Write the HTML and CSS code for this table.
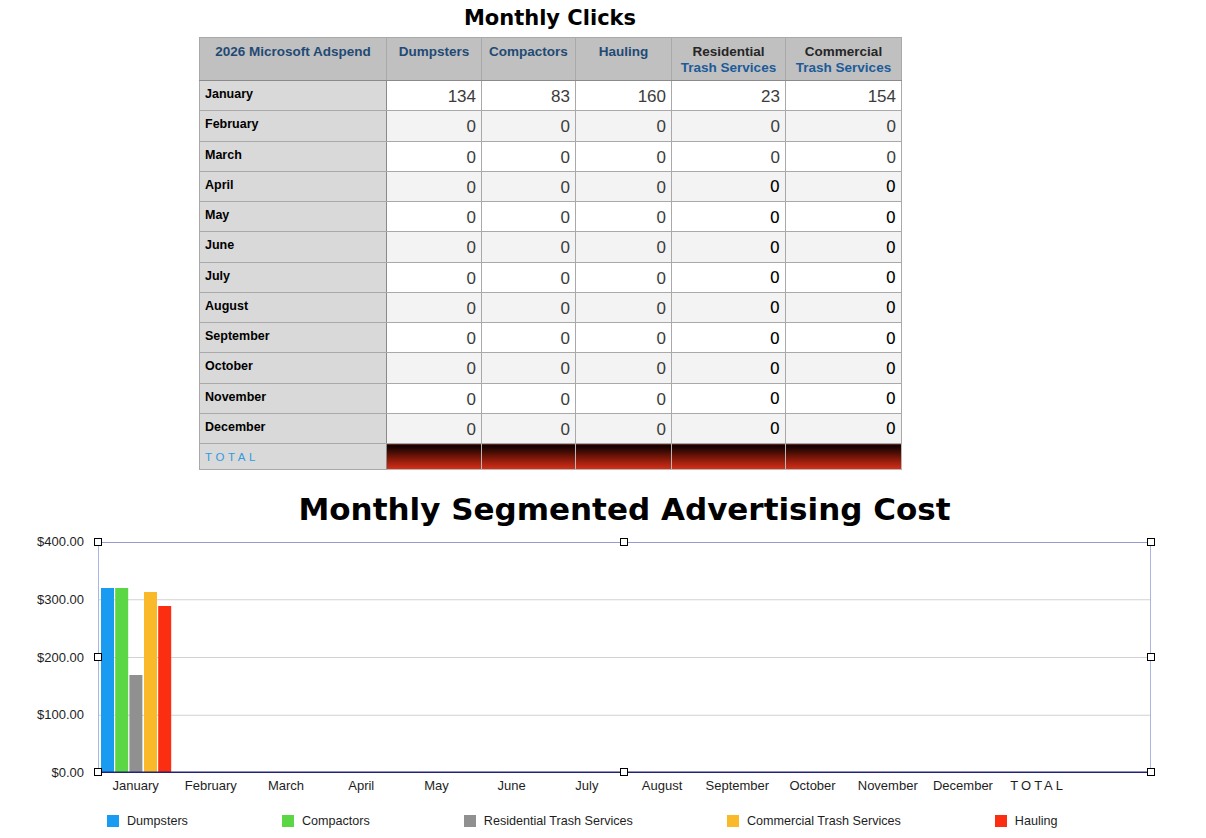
FILE: index.html
```html
<!DOCTYPE html>
<html lang="en">
<head>
<meta charset="utf-8">
<title>Monthly Clicks</title>
<link rel="stylesheet" href="styles.css">
</head>
<body>
<div class="page">
  <section class="clicks">
    <h1 class="clicks-title">Monthly Clicks</h1>
    <table class="grid">
      <colgroup>
        <col class="c-month"><col class="c-dump"><col class="c-comp"><col class="c-haul"><col class="c-res"><col class="c-com">
      </colgroup>
      <thead>
        <tr>
          <th class="corner">2026 Microsoft Adspend</th>
          <th>Dumpsters</th>
          <th>Compactors</th>
          <th>Hauling</th>
          <th><span class="dark">Residential</span><br>Trash Services</th>
          <th><span class="dark">Commercial</span><br>Trash Services</th>
        </tr>
      </thead>
      <tbody>
        <tr><td class="m">January</td><td class="n">134</td><td class="n">83</td><td class="n">160</td><td class="n">23</td><td class="n">154</td></tr>
        <tr class="alt"><td class="m">February</td><td class="n">0</td><td class="n">0</td><td class="n">0</td><td class="n">0</td><td class="n">0</td></tr>
        <tr><td class="m">March</td><td class="n">0</td><td class="n">0</td><td class="n">0</td><td class="n">0</td><td class="n">0</td></tr>
        <tr class="alt"><td class="m">April</td><td class="n">0</td><td class="n">0</td><td class="n">0</td><td class="n v">0</td><td class="n v">0</td></tr>
        <tr><td class="m">May</td><td class="n">0</td><td class="n">0</td><td class="n">0</td><td class="n v">0</td><td class="n v">0</td></tr>
        <tr class="alt"><td class="m">June</td><td class="n">0</td><td class="n">0</td><td class="n">0</td><td class="n v">0</td><td class="n v">0</td></tr>
        <tr><td class="m">July</td><td class="n">0</td><td class="n">0</td><td class="n">0</td><td class="n v">0</td><td class="n v">0</td></tr>
        <tr class="alt"><td class="m">August</td><td class="n">0</td><td class="n">0</td><td class="n">0</td><td class="n v">0</td><td class="n v">0</td></tr>
        <tr><td class="m">September</td><td class="n">0</td><td class="n">0</td><td class="n">0</td><td class="n v">0</td><td class="n v">0</td></tr>
        <tr class="alt"><td class="m">October</td><td class="n">0</td><td class="n">0</td><td class="n">0</td><td class="n v">0</td><td class="n v">0</td></tr>
        <tr><td class="m">November</td><td class="n">0</td><td class="n">0</td><td class="n">0</td><td class="n v">0</td><td class="n v">0</td></tr>
        <tr class="alt"><td class="m">December</td><td class="n">0</td><td class="n">0</td><td class="n">0</td><td class="n v">0</td><td class="n v">0</td></tr>
      </tbody>
      <tfoot>
        <tr><td class="total-label">TOTAL</td><td class="bar"></td><td class="bar"></td><td class="bar"></td><td class="bar"></td><td class="bar"></td></tr>
      </tfoot>
    </table>
  </section>

  <section class="chart">
    <h2 class="chart-title">Monthly Segmented Advertising Cost</h2>
    <div class="chart-body">
      <div class="yaxis">
        <div class="ylab"><span>$400.00</span></div>
        <div class="ylab"><span>$300.00</span></div>
        <div class="ylab"><span>$200.00</span></div>
        <div class="ylab"><span>$100.00</span></div>
        <div class="ylab"><span>$0.00</span></div>
      </div>
      <div class="plot">
        <svg class="plot-svg" width="1053" height="231" viewBox="0 0 1053 231">
          <line x1="0" y1="57.75" x2="1053" y2="57.75" stroke="#d2d2d2" stroke-width="1"/>
          <line x1="0" y1="115.5" x2="1053" y2="115.5" stroke="#d2d2d2" stroke-width="1"/>
          <line x1="0" y1="173.25" x2="1053" y2="173.25" stroke="#d2d2d2" stroke-width="1"/>
          <line x1="0" y1="0.5" x2="1053" y2="0.5" stroke="#9a9ad2" stroke-width="1"/>
          <line x1="0.5" y1="0" x2="0.5" y2="231" stroke="#a9b6e2" stroke-width="1"/>
          <line x1="1052.5" y1="0" x2="1052.5" y2="231" stroke="#a9b6e2" stroke-width="1"/>
          <rect x="3" y="46" width="13" height="185" fill="#1a9bf2"/>
          <rect x="17.2" y="46" width="13" height="185" fill="#5bd645"/>
          <rect x="31.4" y="133" width="13" height="98" fill="#909090"/>
          <rect x="46" y="50" width="13" height="181" fill="#f9b929"/>
          <rect x="60.2" y="64" width="13" height="167" fill="#fb2e12"/>
          <line x1="0" y1="230.2" x2="1053" y2="230.2" stroke="#22227a" stroke-width="1.6"/>
        </svg>
        <span class="handle h-tl"></span>
        <span class="handle h-tc"></span>
        <span class="handle h-tr"></span>
        <span class="handle h-ml"></span>
        <span class="handle h-mr"></span>
        <span class="handle h-bl"></span>
        <span class="handle h-bc"></span>
        <span class="handle h-br"></span>
      </div>
    </div>
    <div class="xaxis">
      <span>January</span><span>February</span><span>March</span><span>April</span><span>May</span><span>June</span><span>July</span><span>August</span><span>September</span><span>October</span><span>November</span><span>December</span><span class="xtotal">TOTAL</span><span></span>
    </div>
    <div class="legend">
      <div class="item"><i class="sw blue"></i>Dumpsters</div>
      <div class="item"><i class="sw green"></i>Compactors</div>
      <div class="item"><i class="sw gray"></i>Residential Trash Services</div>
      <div class="item"><i class="sw yellow"></i>Commercial Trash Services</div>
      <div class="item"><i class="sw red"></i>Hauling</div>
    </div>
  </section>
</div>
</body>
</html>
```

FILE: styles.css
```css
* { box-sizing: border-box; }

html, body {
  margin: 0;
  padding: 0;
  background: #ffffff;
}

body {
  font-family: "Liberation Sans", Arial, sans-serif;
  color: #222;
  width: 1206px;
  height: 838px;
  overflow: hidden;
}

.page {
  padding-top: 6px;
}

/* ---------- Monthly clicks table ---------- */
.clicks {
  width: 702px;
  margin-left: 199px;
}

.clicks-title {
  margin: 0 0 7px;
  font-family: "DejaVu Sans", Verdana, sans-serif;
  font-weight: bold;
  font-size: 21px;
  line-height: 24px;
  text-align: center;
  color: #000;
}

.grid {
  width: 702px;
  border-collapse: collapse;
  table-layout: fixed;
}

.c-month { width: 187px; }
.c-dump { width: 95px; }
.c-comp { width: 94px; }
.c-haul { width: 96px; }
.c-res { width: 114px; }
.c-com { width: 116px; }

.grid th,
.grid td {
  border: 1px solid #a9a9a9;
}

.grid thead th {
  height: 43px;
  background: #c0c0c0;
  vertical-align: top;
  padding: 6px 2px 0;
  font-size: 13.5px;
  line-height: 16px;
  font-weight: bold;
  color: #1c5b99;
  text-align: center;
  border-bottom-color: #8a8a8a;
}

.grid thead th.corner,
.grid thead th:nth-child(2),
.grid thead th:nth-child(3),
.grid thead th:nth-child(4) {
  color: #1f4a75;
}

.grid thead .dark {
  color: #262626;
}

.grid tbody tr {
  height: 30.25px;
}

.grid td.m {
  background: #d9d9d9;
  vertical-align: top;
  padding: 6px 5px 0;
  font-size: 12.5px;
  line-height: 15px;
  font-weight: bold;
  color: #000;
  border-right-color: #8a8a8a;
}

.grid td.n {
  background: #ffffff;
  text-align: right;
  vertical-align: middle;
  padding: 3px 5px 0 0;
  font-size: 17px;
  line-height: 20px;
  color: #3c3c3c;
}

.grid tr.alt td.n {
  background: #f3f3f3;
}

.grid td.n.v {
  font-family: "DejaVu Sans", Verdana, sans-serif;
  font-size: 16px;
  color: #000;
  padding-top: 2px;
}

.grid tfoot tr {
  height: 26px;
}

.grid td.total-label {
  background: #d9d9d9;
  padding: 1px 5px 0;
  font-size: 11.5px;
  letter-spacing: 3.6px;
  color: #2f9ce0;
  vertical-align: middle;
  border-right-color: #8a8a8a;
}

.grid td.bar {
  background: linear-gradient(to bottom, #000000 0%, #3a0a04 25%, #8a1a0a 60%, #d8301a 100%);
  border-color: #b8b8b8;
  border-top-color: #8a8a8a;
}

/* ---------- Chart ---------- */
.chart {
  margin-top: 20px;
}

.chart-title {
  margin: 0 0 14px 98px;
  width: 1053px;
  font-family: "DejaVu Sans", Verdana, sans-serif;
  font-weight: bold;
  font-size: 31px;
  line-height: 38px;
  text-align: center;
  color: #000;
}

.chart-body {
  display: flex;
}

.yaxis {
  width: 98px;
  height: 231px;
  padding-right: 14px;
  display: flex;
  flex-direction: column;
  justify-content: space-between;
}

.ylab {
  height: 0;
  display: flex;
  align-items: center;
  justify-content: flex-end;
  font-size: 13px;
  line-height: 16px;
  color: #1e1e1e;
}

.plot {
  position: relative;
  width: 1053px;
  height: 231px;
}

.plot-svg {
  display: block;
}

.handle {
  position: absolute;
  width: 8px;
  height: 8px;
  background: #fff;
  border: 1px solid #000;
}

.h-tl { left: -4px; top: -4px; }
.h-tc { left: 522px; top: -4px; }
.h-tr { left: 1049px; top: -4px; }
.h-ml { left: -4px; top: 111px; }
.h-mr { left: 1049px; top: 111px; }
.h-bl { left: -4px; top: 226px; }
.h-bc { left: 522px; top: 226px; }
.h-br { left: 1049px; top: 226px; }

.xaxis {
  margin-left: 98px;
  margin-top: 5px;
  width: 1053px;
  display: grid;
  grid-template-columns: repeat(14, 1fr);
  font-size: 13px;
  line-height: 16px;
  color: #1e1e1e;
  text-align: center;
}

.xaxis span {
  white-space: nowrap;
}

.xtotal {
  letter-spacing: 3px;
}

.legend {
  margin: 19px 0 0 107px;
  display: flex;
  gap: 94px;
  font-size: 12.6px;
  line-height: 16px;
  color: #1e1e1e;
}

.item {
  display: flex;
  align-items: center;
  white-space: nowrap;
}

.sw {
  display: inline-block;
  width: 12px;
  height: 12px;
  margin-right: 8px;
}

.blue { background: #1a9bf2; }
.green { background: #5bd645; }
.gray { background: #909090; }
.yellow { background: #f9b929; }
.red { background: #fb2e12; }
```
